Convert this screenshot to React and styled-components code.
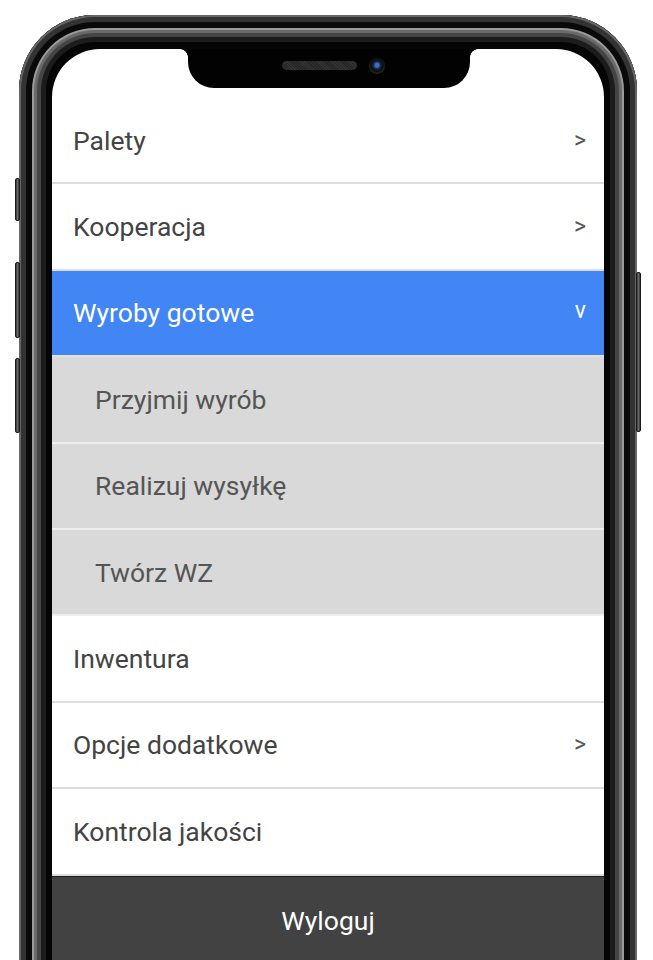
import React from "react";
import styled, { createGlobalStyle } from "styled-components";

const GlobalStyle = createGlobalStyle`
html, body {
  margin:0;
  padding:0;
  background:#fff;
  overflow:hidden;
}
body {
  font-family:Roboto, "Liberation Sans", sans-serif;
}
`

const Phone = styled.div`
position:relative;
box-sizing:border-box;
width:618px;
height:1000px;
margin:15px 0 0 19px;
padding:34px 33px 0;
border-radius:76px 76px 0 0;
background:#050505;
box-shadow:
  inset 0 0 0 2px #666,
  inset 0 0 0 7px #333,
  inset 0 0 0 13px #0a0a0a,
  inset 0 0 0 15px #9a9a9a,
  inset 0 0 0 18px #6a6a6a,
  inset 0 0 0 22px #454545,
  inset 0 0 0 27px #1c1c1c;
`

const SideButton = styled.div`
position:absolute;
top:${p => p.$top}px;
height:${p => p.$height}px;
${p => p.$right ? "right:-4px;" : "left:-4px;"}
width:5px;
background:linear-gradient(90deg, #333, #6a6a6a, #333);
border:1px solid #1a1a1a;
box-sizing:border-box;
border-radius:2px;
`

const Screen = styled.div`
position:relative;
height:100%;
display:flex;
flex-direction:column;
background:#fff;
border-radius:48px 48px 0 0;
overflow:hidden;
`

const Notch = styled.div`
position:absolute;
top:0;
left:136px;
width:282px;
height:39px;
background:#020202;
border-radius:0 0 26px 26px;
display:flex;
align-items:center;
justify-content:center;
gap:12px;
padding:0 0 6px 8px;
box-sizing:border-box;
&::before, &::after {
  content:"";
  position:absolute;
  top:0;
  width:8px;
  height:8px;
}
&::before {
  left:-8px;
  background:radial-gradient(circle at 0 100%, transparent 7.5px, #020202 8px);
}
&::after {
  right:-8px;
  background:radial-gradient(circle at 100% 100%, transparent 7.5px, #020202 8px);
}
`

const Speaker = styled.div`
width:75px;
height:9px;
border-radius:5px;
background:repeating-linear-gradient(45deg, #252525 0 1px, #333 1px 2px);
`

const Camera = styled.div`
width:16px;
height:16px;
border-radius:50%;
background:radial-gradient(circle at 50% 45%, #3a6fc0 0 2px, #142850 3.5px, #0b0b0b 6px, #222 8px);
`

const TopSpace = styled.div`
height:49px;
flex-shrink:0;
`

const Row = styled.div`
display:flex;
align-items:center;
justify-content:space-between;
flex-shrink:0;
height:84.4px;
padding:0 18px 0 ${p => p.$variant === "sub" ? 43 : 21}px;
font-size:26.5px;
color:${p => p.$variant === "active" ? "#fff" : p.$variant === "sub" ? "#555" : "#444"};
background:${p => p.$variant === "active" ? "#4285f4" : p.$variant === "sub" ? "#d9d9d9" : "#fff"};
border-bottom:2px solid ${p => p.$variant === "sub" ? "#eeeeee" : p.$variant === "active" ? "#e4e4e4" : "#dddddd"};
`

const Arrow = styled.span`
font-size:23px;
color:${p => p.$light ? "#fff" : "#555"};
margin-top:${p => p.$down ? -4 : 0}px;
`

const Logout = styled.div`
flex:1;
display:flex;
justify-content:center;
padding-top:28px;
font-size:26.5px;
color:#fff;
background:#424242;
border-top:1px solid #1c1c1c;
`

const items = [
  { label: "Palety", arrow: ">" },
  { label: "Kooperacja", arrow: ">" },
  { label: "Wyroby gotowe", arrow: "v", open: true, children: ["Przyjmij wyrób", "Realizuj wysyłkę", "Twórz WZ"] },
  { label: "Inwentura" },
  { label: "Opcje dodatkowe", arrow: ">" },
  { label: "Kontrola jakości" },
]

function App() {
  const menu = items.map((item, index) => {
    return <React.Fragment key={index}>
      <Row $variant={item.open ? "active" : "default"}>
        <span>{item.label}</span>
        {item.arrow && <Arrow $light={item.open} $down={item.open}>{item.arrow}</Arrow>}
      </Row>
      {item.open && item.children.map((child) => (
        <Row key={child} $variant="sub">{child}</Row>
      ))}
    </React.Fragment>
  })
  return (
    <>
      <GlobalStyle />
      <Phone>
        <SideButton $top={163} $height={43} />
        <SideButton $top={247} $height={76} />
        <SideButton $top={343} $height={75} />
        <SideButton $right $top={257} $height={160} />
        <Screen>
          <Notch>
            <Speaker />
            <Camera />
          </Notch>
          <TopSpace />
          {menu}
          <Logout>Wyloguj</Logout>
        </Screen>
      </Phone>
    </>
  );
}

export default App;
